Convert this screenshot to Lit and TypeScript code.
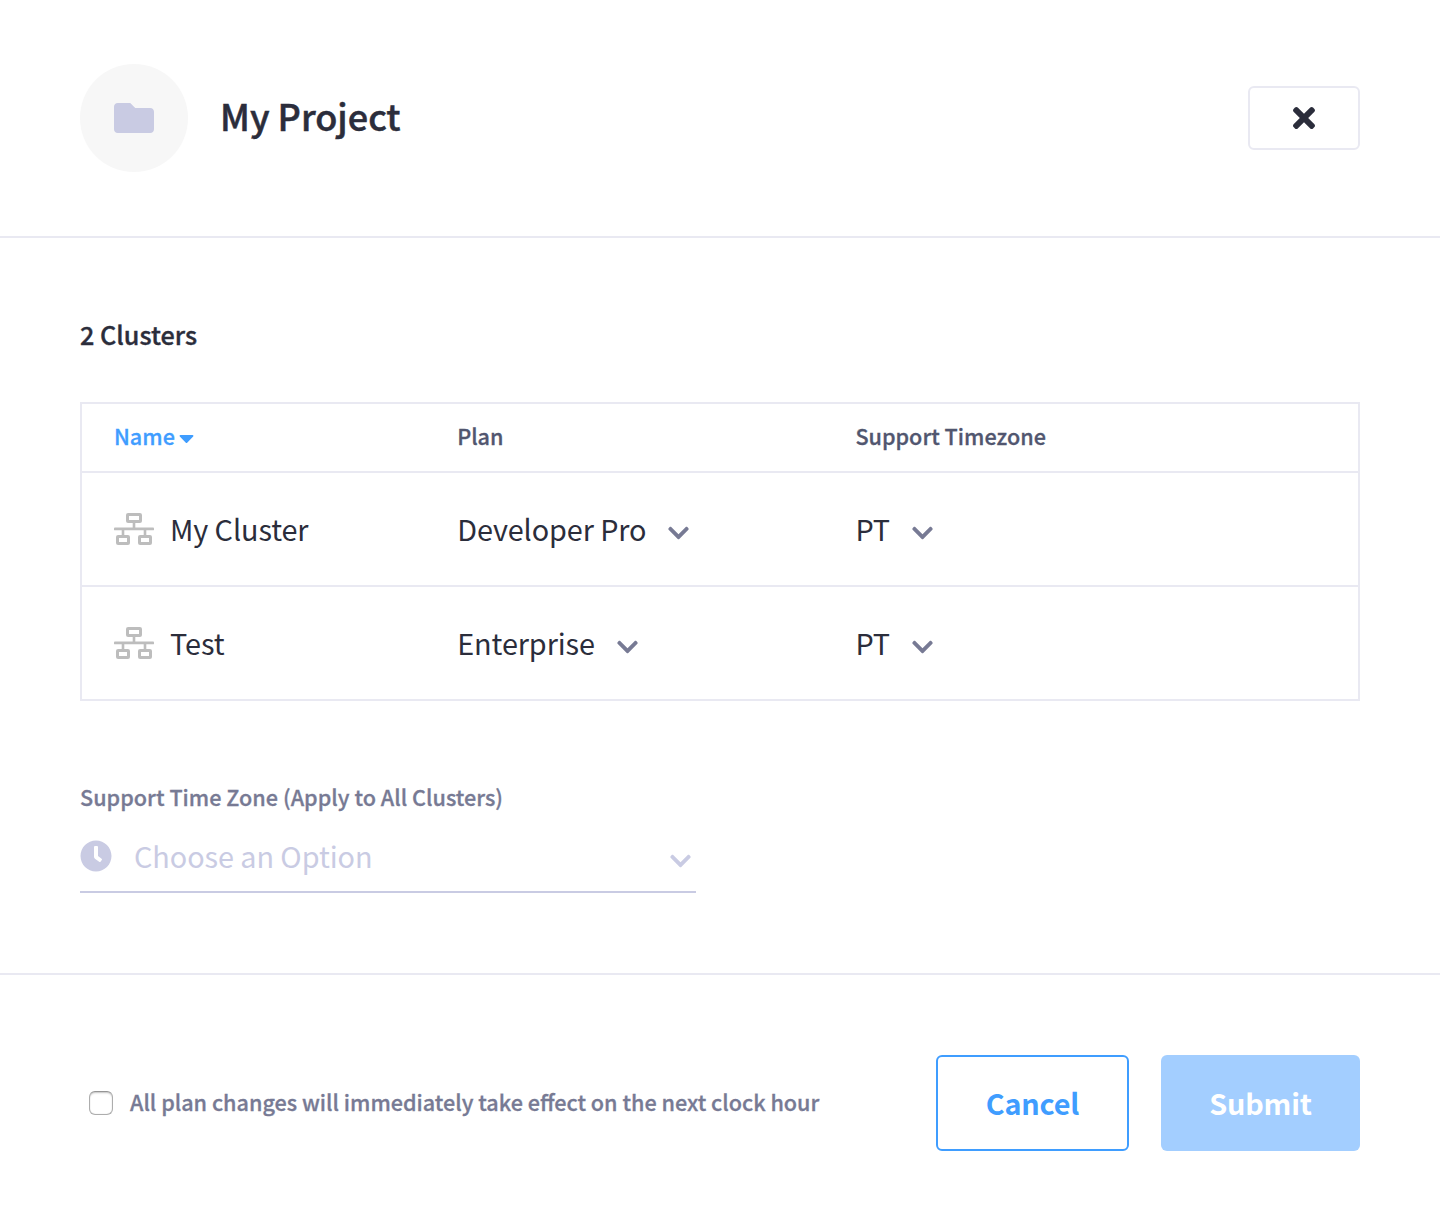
import { LitElement, html, css, svg } from 'lit';
import { customElement, property, state } from 'lit/decorators.js';

type Glyph = { w: number; d: string };

const GLYPHS: Record<string, Glyph> = {
  folder: {
    w: 512,
    d: 'M464 128H272l-64-64H48C21.49 64 0 85.49 0 112v288c0 26.51 21.49 48 48 48h416c26.51 0 48-21.49 48-48V176c0-26.51-21.49-48-48-48z',
  },
  times: {
    w: 352,
    d: 'M242.72 256l100.07-100.07c12.28-12.28 12.28-32.19 0-44.48l-22.24-22.24c-12.28-12.28-32.19-12.28-44.48 0L176 189.28 75.93 89.21c-12.28-12.28-32.19-12.28-44.48 0L9.21 111.45c-12.28 12.28-12.28 32.19 0 44.48L109.28 256 9.21 356.07c-12.28 12.28-12.28 32.19 0 44.48l22.24 22.24c12.28 12.28 32.2 12.28 44.48 0L176 322.72l100.07 100.07c12.28 12.28 32.2 12.28 44.48 0l22.24-22.24c12.28-12.28 12.28-32.19 0-44.48L242.72 256z',
  },
  clock: {
    w: 512,
    d: 'M256,8C119,8,8,119,8,256S119,504,256,504,504,393,504,256,393,8,256,8Zm92.49,313h0l-20,25a16,16,0,0,1-22.49,2.5h0l-67-49.72a40,40,0,0,1-15-31.23V112a16,16,0,0,1,16-16h32a16,16,0,0,1,16,16V256l58,42.5A16,16,0,0,1,348.49,321Z',
  },
  caret: {
    w: 320,
    d: 'M31.3 192h257.3c17.8 0 26.7 21.5 14.1 34.1L174.1 354.7c-7.8 7.8-20.5 7.8-28.3 0L17.2 226.1C4.6 213.5 13.5 192 31.3 192z',
  },
  chevron: {
    w: 448,
    d: 'M207.029 381.476L12.686 187.132c-9.373-9.373-9.373-24.569 0-33.941l22.667-22.667c9.357-9.357 24.522-9.375 33.901-.04L224 284.505l154.745-154.021c9.379-9.335 24.544-9.317 33.901.04l22.667 22.667c9.373 9.373 9.373 24.569 0 33.941L240.971 381.476c-9.373 9.372-24.569 9.372-33.942 0z',
  },
};

@customElement('app-icon')
class AppIcon extends LitElement {
  static styles = css`
    :host { display: block; flex: none; }
    svg { display: block; fill: currentColor; }
  `;
  @property() name = 'folder';
  @property({ type: Number }) size = 24;

  render() {
    const g = GLYPHS[this.name];
    return html`<svg width=${(g.w * this.size) / 512} height=${this.size} viewBox="0 0 ${g.w} 512">
      ${svg`<path d=${g.d}></path>`}
    </svg>`;
  }
}

/* Three outlined nodes joined by a horizontal bus. */
@customElement('cluster-icon')
class ClusterIcon extends LitElement {
  static styles = css`
    :host { display: block; flex: none; color: #bdbdbd; }
    svg { display: block; fill: currentColor; }
    .node { fill: none; stroke: currentColor; stroke-width: 3; }
  `;

  render() {
    return html`<svg width="40" height="32" viewBox="0 0 40 32">
      <rect class="node" x="13.5" y="1.5" width="13" height="7" rx="0.6"></rect>
      <rect class="node" x="3.5" y="23.5" width="11" height="7" rx="0.6"></rect>
      <rect class="node" x="25.5" y="23.5" width="11" height="7" rx="0.6"></rect>
      <rect x="0" y="14.6" width="40" height="2.7" rx="0.9"></rect>
      <rect x="18.7" y="9.5" width="2.6" height="6"></rect>
      <rect x="7.7" y="16" width="2.6" height="6.5"></rect>
      <rect x="29.7" y="16" width="2.6" height="6.5"></rect>
    </svg>`;
  }
}

@customElement('app-root')
class AppRoot extends LitElement {
  static styles = css`
    :host {
      display: block;
      min-height: 1212px;
      background: #fff;
      color: #2b2d3b;
      font-family: 'Noto Sans CJK SC', 'Source Sans Pro', sans-serif;
      white-space: nowrap;
    }
    * { box-sizing: border-box; }
    button { font-family: inherit; margin: 0; padding: 0; }
    .header {
      display: flex;
      align-items: center;
      height: 238px;
      padding: 0 80px;
      border-bottom: 2px solid #e9e9f2;
    }
    .avatar {
      display: flex;
      align-items: center;
      justify-content: center;
      width: 108px;
      height: 108px;
      border-radius: 50%;
      background: #f7f7f7;
      color: #c9cbe3;
    }
    .title {
      flex: 1;
      margin: 0 0 6px 32px;
      font-size: 36px;
      line-height: 56px;
      font-weight: 500;
      -webkit-text-stroke: 0.5px currentColor;
    }
    .close {
      display: flex;
      align-items: center;
      justify-content: center;
      width: 112px;
      height: 64px;
      border: 2px solid #e9e9f2;
      border-radius: 6px;
      background: #fff;
      color: #2b2d3b;
    }
    .body {
      height: 737px;
      padding: 76px 80px 0;
      border-bottom: 2px solid #e9e9f2;
    }
    .count {
      margin: 0 0 48px;
      font-size: 25.2px;
      line-height: 40px;
      font-weight: 500;
      -webkit-text-stroke: 0.35px currentColor;
    }
    .table { border: 2px solid #e9e9f2; }
    .row {
      display: grid;
      grid-template-columns: 343.2px 398.2px 1fr;
      align-items: center;
      height: 114px;
      padding: 0 32px;
      border-top: 2px solid #e9e9f2;
      font-size: 28.8px;
      line-height: 48px;
      letter-spacing: -0.08px;
    }
    .row.head {
      height: 67px;
      padding-bottom: 3px;
      border-top: 0;
      font-size: 21.6px;
      line-height: 32px;
      font-weight: 500;
      letter-spacing: 0;
      -webkit-text-stroke: 0.3px currentColor;
      color: #51566f;
    }
    .cell { display: flex; align-items: center; }
    .sorted { gap: 4.6px; color: #3f9dff; }
    .sorted app-icon { padding-top: 4px; }
    .named { gap: 16px; }
    .pick { gap: 21.7px; }
    .pick app-icon { color: #777a94; padding-top: 8px; }
    .label {
      margin-top: 80px;
      font-size: 21.6px;
      line-height: 32px;
      font-weight: 500;
      letter-spacing: 0.02px;
      -webkit-text-stroke: 0.3px currentColor;
      color: #777a94;
    }
    .select {
      display: flex;
      align-items: center;
      width: 616px;
      height: 80px;
      padding: 8px 5.5px 0 0;
      border-bottom: 2px solid #c9cbe3;
      color: #c9cbe3;
      font-size: 28.8px;
      line-height: 48px;
      letter-spacing: -0.05px;
    }
    .value { flex: 1; margin-left: 22px; }
    .arrow { padding-top: 10px; }
    .footer {
      display: flex;
      align-items: center;
      gap: 32px;
      padding: 80px 80px 0;
    }
    .agree {
      flex: 1;
      display: flex;
      align-items: center;
      gap: 17px;
      padding-left: 9px;
      font-size: 21.6px;
      line-height: 32px;
      font-weight: 500;
      color: #777a94;
    }
    .terms { padding-bottom: 2px; -webkit-text-stroke: 0.3px currentColor; }
    .box {
      width: 24px;
      height: 24px;
      border: 1px solid #adadad;
      border-top-color: #959595;
      border-radius: 6px;
      background: #fff;
      box-shadow: inset 0 2px 2px -1px rgba(0, 0, 0, 0.22), inset 0 0 1px rgba(0, 0, 0, 0.25);
    }
    .btn {
      height: 96px;
      border-radius: 6px;
      font-size: 28.8px;
      line-height: 48px;
      font-weight: 700;
      letter-spacing: -0.15px;
    }
    .cancel { width: 193px; border: 2px solid #3f9dff; background: #fff; color: #3f9dff; }
    .submit { width: 199px; border: 0; background: #a3ceff; color: #fff; }
  `;

  @state() private clusters = [
    { name: 'My Cluster', plan: 'Developer Pro', zone: 'PT' },
    { name: 'Test', plan: 'Enterprise', zone: 'PT' },
  ];

  private picker(value: string) {
    return html`<div class="cell pick"><span>${value}</span><app-icon name="chevron" size="24"></app-icon></div>`;
  }

  render() {
    return html`
      <header class="header">
        <div class="avatar"><app-icon name="folder" size="40"></app-icon></div>
        <h1 class="title">My Project</h1>
        <button class="close"><app-icon name="times" size="32"></app-icon></button>
      </header>
      <main class="body">
        <h2 class="count">${this.clusters.length} Clusters</h2>
        <div class="table">
          <div class="row head">
            <div class="cell sorted"><span>Name</span><app-icon name="caret" size="24"></app-icon></div>
            <div>Plan</div>
            <div>Support Timezone</div>
          </div>
          ${this.clusters.map(
            (c) => html`<div class="row">
              <div class="cell named"><cluster-icon></cluster-icon><span>${c.name}</span></div>
              ${this.picker(c.plan)} ${this.picker(c.zone)}
            </div>`
          )}
        </div>
        <div class="label">Support Time Zone (Apply to All Clusters)</div>
        <div class="select">
          <app-icon name="clock" size="32"></app-icon>
          <span class="value">Choose an Option</span>
          <app-icon class="arrow" name="chevron" size="24"></app-icon>
        </div>
      </main>
      <footer class="footer">
        <div class="agree">
          <span class="box"></span>
          <span class="terms">All plan changes will immediately take effect on the next clock hour</span>
        </div>
        <button class="btn cancel">Cancel</button>
        <button class="btn submit">Submit</button>
      </footer>
    `;
  }
}
